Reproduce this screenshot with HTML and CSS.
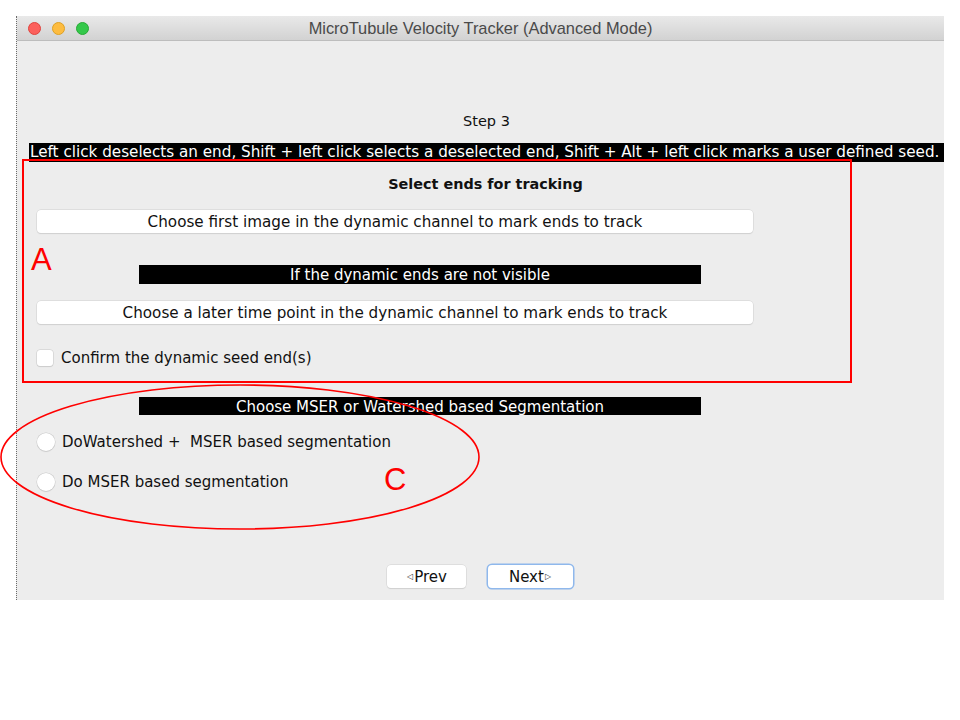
FILE: index.html
```html
<!DOCTYPE html>
<html>
<head>
<meta charset="utf-8">
<link rel="stylesheet" href="styles.css">
</head>
<body>
<div class="page">
  <div class="window">
    <div class="titlebar">
      <div class="lights">
        <span class="light red"></span>
        <span class="light yellow"></span>
        <span class="light green"></span>
      </div>
      <div class="title">MicroTubule Velocity Tracker (Advanced Mode)</div>
      <div class="spacer"></div>
    </div>
    <div class="content">
      <div class="step">Step 3</div>
      <div class="bar wide">Left click deselects an end, Shift + left click selects a deselected end, Shift + Alt + left click marks a user defined seed.</div>
      <div class="heading">Select ends for tracking</div>
      <div class="btn long b1">Choose first image in the dynamic channel to mark ends to track</div>
      <div class="bar mid b2">If the dynamic ends are not visible</div>
      <div class="btn long b3">Choose a later time point in the dynamic channel to mark ends to track</div>
      <label class="check-row"><span class="checkbox"></span><span>Confirm the dynamic seed end(s)</span></label>
      <div class="bar mid b4">Choose MSER or Watershed based Segmentation</div>
      <label class="radio-row r1"><span class="radio"></span><span>DoWatershed +&nbsp; MSER based segmentation</span></label>
      <label class="radio-row r2"><span class="radio"></span><span>Do MSER based segmentation</span></label>
      <div class="nav">
        <div class="btn nav-btn prev"><span class="tri">&#9665;</span>Prev</div>
        <div class="btn nav-btn next focus">Next<span class="tri">&#9655;</span></div>
      </div>
    </div>
  </div>
  <div class="box-a"></div>
  <div class="mark mark-a">A</div>
  <svg class="ellipse-c" width="484" height="152" viewBox="0 0 484 152">
    <ellipse cx="241" cy="75" rx="239" ry="72" fill="none" stroke="#ff0000" stroke-width="1.6"/>
  </svg>
  <div class="mark mark-c">C</div>
</div>
</body>
</html>
```
FILE: styles.css
```css
html, body {
  margin: 0;
  padding: 0;
  background: #ffffff;
}
.page {
  position: relative;
  width: 960px;
  height: 720px;
  padding-top: 16px;
  box-sizing: border-box;
}
.window {
  margin-left: 16px;
  width: 928px;
  height: 584px;
  background: #ededed;
  border-left: 1px dotted #6a6a6a;
  box-sizing: border-box;
  display: flex;
  flex-direction: column;
  font-family: "DejaVu Sans", sans-serif;
  font-size: 15px;
  color: #111;
}
.titlebar {
  height: 25px;
  box-sizing: border-box;
  background: linear-gradient(#e9e9e9, #d2d2d2);
  border-bottom: 1px solid #bdbdbd;
  display: grid;
  grid-template-columns: 1fr auto 1fr;
  align-items: center;
}
.lights {
  display: flex;
  gap: 11px;
  padding-left: 11px;
}
.light {
  width: 13px;
  height: 13px;
  border-radius: 50%;
  box-sizing: border-box;
}
.red { background: #fc605c; border: 1px solid #e0443e; }
.yellow { background: #fdbc40; border: 1px solid #dea123; }
.green { background: #34c84a; border: 1px solid #27aa35; }
.title {
  text-align: center;
  font-family: "Liberation Sans", sans-serif;
  font-size: 16.4px;
  color: #4a4a4a;
}
.content {
  display: flex;
  flex-direction: column;
  flex: 1;
}
.step {
  margin-top: 71px;
  line-height: 18px;
  text-align: center;
  font-size: 14.5px;
  padding-left: 12px;
}
.bar {
  background: #000;
  color: #fff;
  line-height: 19px;
  height: 19px;
  white-space: nowrap;
  overflow: hidden;
}
.bar.wide {
  margin-top: 13px;
  margin-left: 12px;
  padding-left: 1px;
  font-size: 15.2px;
}
.heading {
  margin-top: 13px;
  line-height: 18px;
  text-align: center;
  font-weight: bold;
  font-size: 14.4px;
  padding-left: 10px;
}
.btn {
  background: #fff;
  border-radius: 4px;
  box-shadow: 0 0 0 0.5px #d0d0d0, 0 1px 1px rgba(0,0,0,0.12);
  height: 23px;
  line-height: 25px;
  text-align: center;
  box-sizing: border-box;
  white-space: nowrap;
}
.btn.long {
  margin-left: 20px;
  width: 716px;
  font-size: 15.2px;
}
.b1 { margin-top: 17px; }
.bar.mid {
  margin-left: 122px;
  width: 562px;
  text-align: center;
  line-height: 20px;
}
.b2 { margin-top: 32px; }
.b3 { margin-top: 17px; }
.check-row {
  margin-top: 25px;
  margin-left: 20px;
  height: 18px;
  display: flex;
  align-items: center;
  gap: 8px;
}
.checkbox {
  width: 16px;
  height: 16px;
  background: #fff;
  border-radius: 3px;
  box-shadow: 0 0 0 0.5px #c8c8c8, 0 1px 1px rgba(0,0,0,0.12);
}
.b4 {
  margin-top: 30px;
  height: 18px;
  line-height: 19px;
}
.radio-row {
  margin-left: 20px;
  height: 20px;
  display: flex;
  align-items: center;
  gap: 7px;
}
.r1 { margin-top: 17px; }
.r2 { margin-top: 20px; }
.radio {
  width: 18px;
  height: 18px;
  border-radius: 50%;
  background: #fff;
  box-shadow: 0 0 0 0.5px #c8c8c8, 0 1px 1px rgba(0,0,0,0.12);
}
.nav {
  margin-top: 73px;
  display: flex;
  gap: 22px;
  padding-left: 370px;
}
.nav-btn {
  display: flex;
  align-items: center;
  justify-content: center;
  padding-top: 1px;
}
.prev { width: 79px; }
.next { width: 85px; }
.focus {
  box-shadow: 0 0 0 1.5px #8fb8ec, 0 1px 1px rgba(0,0,0,0.12);
}
.tri {
  font-size: 8px;
  color: #333;
  line-height: 1;
  margin: 0 1px;
}
.box-a {
  position: absolute;
  left: 22px;
  top: 159px;
  width: 830px;
  height: 224px;
  border: 2px solid #ff0000;
  box-sizing: border-box;
}
.mark {
  position: absolute;
  font-family: "Liberation Sans", sans-serif;
  font-size: 31px;
  line-height: 1;
  color: #ff0000;
}
.mark-a { left: 31px; top: 244px; }
.mark-c { left: 384px; top: 464px; }
.ellipse-c {
  position: absolute;
  left: -1px;
  top: 382px;
}
```
